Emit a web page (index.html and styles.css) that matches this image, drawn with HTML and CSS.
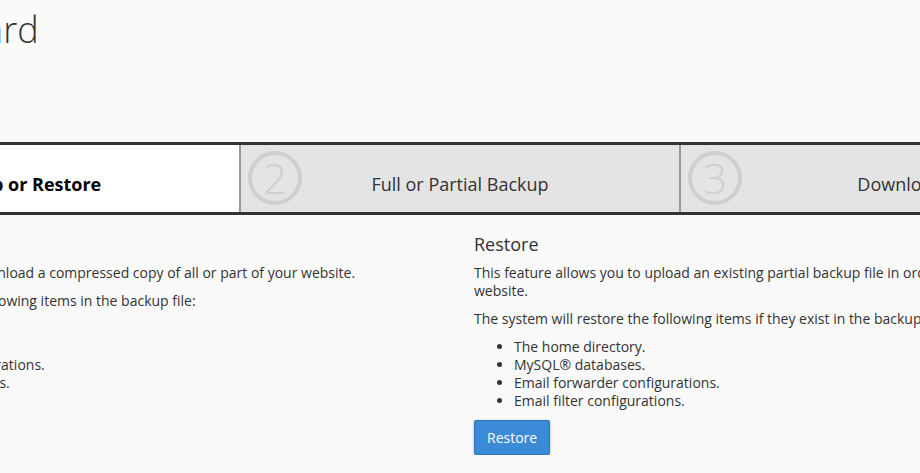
FILE: index.html
```html
<!DOCTYPE html>
<html lang="en">
<head>
<meta charset="utf-8">
<title>Backup Wizard</title>
<link rel="stylesheet" href="styles.css">
</head>
<body>
<div class="page">
  <h1 class="title">Backup Wizard</h1>

  <div class="steps">
    <div class="step step-active">
      <span class="step-num">1</span>
      <span class="step-label">Backup or Restore</span>
    </div>
    <div class="step">
      <span class="step-num">2</span>
      <span class="step-label">Full or Partial Backup</span>
    </div>
    <div class="step">
      <span class="step-num">3</span>
      <span class="step-label">Download</span>
    </div>
  </div>

  <div class="cols">
    <section class="col">
      <h2 class="col-title">Backup</h2>
      <p>This feature allows you to download a compressed copy of all or part of your website.</p>
      <p>The system will include the following items in the backup file:</p>
      <ul>
        <li>The home directory.</li>
        <li>MySQL® databases.</li>
        <li>Email forwarder configurations.</li>
        <li>Email filter configurations.</li>
      </ul>
      <button class="btn" type="button">Backup</button>
    </section>
    <section class="col">
      <h2 class="col-title">Restore</h2>
      <p>This feature allows you to upload an existing partial backup file in order to restore part of your website.</p>
      <p>The system will restore the following items if they exist in the backup file:</p>
      <ul>
        <li>The home directory.</li>
        <li>MySQL® databases.</li>
        <li>Email forwarder configurations.</li>
        <li>Email filter configurations.</li>
      </ul>
      <button class="btn" type="button">Restore</button>
    </section>
  </div>
</div>
</body>
</html>
```

FILE: styles.css
```css
html, body {
  margin: 0;
  padding: 0;
  overflow: hidden;
  background: #fafafa;
}

body {
  display: flex;
  justify-content: center;
  font-family: "Open Sans", "Liberation Sans", sans-serif;
  font-size: 14px;
  line-height: 18px;
  color: #333;
}

.page {
  flex: 0 0 1320px;
  width: 1320px;
  margin-left: -2px;
}

.title {
  margin: 10px 0 0;
  font-size: 36px;
  font-weight: 300;
  line-height: 1.1;
  color: #333;
}

.steps {
  margin-top: 92px;
  display: grid;
  grid-template-columns: repeat(3, 440px);
  border-top: 3px solid #333;
  border-bottom: 3px solid #333;
}

.step {
  box-sizing: border-box;
  height: 67px;
  display: grid;
  grid-template-columns: 54px 1fr 54px;
  align-items: center;
  padding: 0 7px;
  background: #e4e4e4;
  border-left: 2px solid #999;
}

.step-active {
  background: #fff;
  border-left: 0;
}

.step-num {
  box-sizing: border-box;
  width: 54px;
  height: 54px;
  border: 4px solid #cfcfcf;
  border-radius: 50%;
  display: flex;
  align-items: center;
  justify-content: center;
  font-size: 42px;
  font-weight: 300;
  line-height: 1;
  color: #cfcfcf;
}

.step-active .step-num {
  visibility: hidden;
}

.step-label {
  text-align: center;
  font-size: 18px;
  line-height: 24px;
  margin-top: 12px;
  color: #333;
}

.step-active .step-label {
  font-weight: 700;
  color: #000;
}

.cols {
  display: grid;
  grid-template-columns: 645px 645px;
  column-gap: 30px;
  margin-top: 20px;
}

.col-title {
  margin: 0 0 10px;
  font-size: 18px;
  font-weight: 400;
  line-height: 1.1;
  color: #333;
}

.col p {
  margin: 0 0 10px;
}

.col ul {
  margin: 0 0 10px;
  padding-left: 40px;
}

.btn {
  font-family: inherit;
  font-size: 14px;
  line-height: 20px;
  padding: 7px 12px 6px;
  color: #fff;
  background: #3a8ad6;
  border: 1px solid #2d75bd;
  border-radius: 2px;
  box-shadow: 0 1px 3px rgba(0, 0, 0, 0.3);
}
```
